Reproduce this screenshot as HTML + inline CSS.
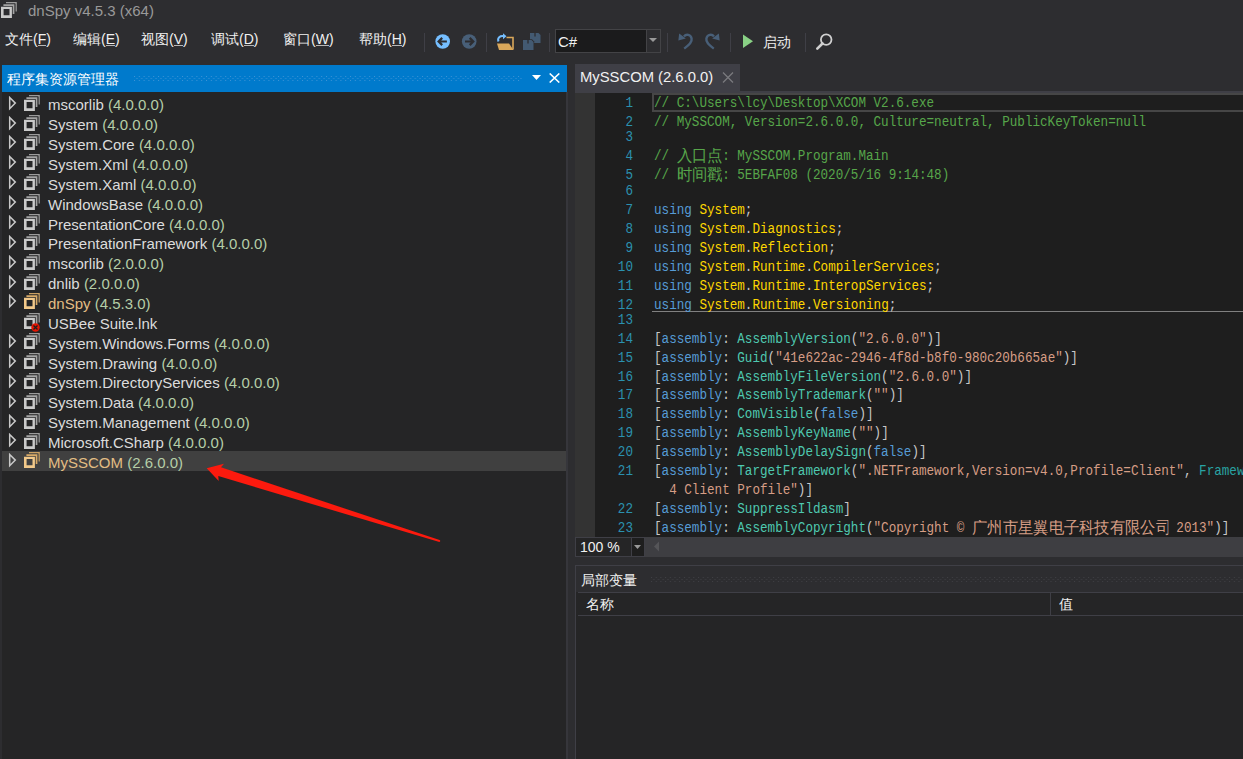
<!DOCTYPE html>
<html><head><meta charset="utf-8">
<style>
*{margin:0;padding:0;box-sizing:border-box}
html,body{width:1243px;height:759px;overflow:hidden;background:#2d2d30;font-family:"Liberation Sans",sans-serif;position:relative}
.a{position:absolute}
.t{position:absolute;white-space:pre;line-height:1}
#title{left:28px;top:3px;font-size:15px;color:#999999}
.menu{top:32px;font-size:14px;color:#f1f1f1}
.menu u{text-decoration:none;display:inline-block;line-height:11px;border-bottom:1px solid #b8b8b8}
.sep{position:absolute;width:1px;background:#3f3f46}
.row{position:absolute;left:2px;width:565px;height:20px}
.row .nm{position:absolute;left:46px;top:2px;font-size:15px;color:#dcdcdc;white-space:pre;line-height:16px}
.ver{color:#b5cea8}
.org{color:#e2bd84}
.ln{position:absolute;left:595px;width:38px;text-align:right;font-family:"Liberation Mono",monospace;font-size:14px;color:#2b91af;white-space:pre;line-height:14px;transform:scaleX(0.9);transform-origin:100% 0}
.cl{position:absolute;left:654px;font-family:"Liberation Mono",monospace;font-size:14px;color:#dcdcdc;white-space:pre;line-height:14px;transform:scaleX(0.901);transform-origin:0 0}
.cm{color:#57a64a}.kw{color:#569cd6}.ns{color:#ffd700}.pu{color:#c8c8c8}.at{color:#4ec9b0}.st{color:#d69d85}.tl{color:#29a3a3}
.cj{display:inline-block;overflow:hidden;vertical-align:top;font-family:"Liberation Sans",sans-serif;font-size:15px;line-height:14px}
.cl .cj{font-size:16.8px;line-height:16px;margin-top:-1px;height:16px}
</style></head><body>
<svg class="a" style="left:1px;top:1.9px" width="17" height="17" viewBox="0 0 17 17"><path d="M5 0H15.8V9.5H14.3V1.6H5Z" fill="#9c9c9c"/><path d="M1.6 1.6H14.4V12.8H10.6V4.2H1.6Z" fill="#2d2d30"/><path d="M2.4 2.3H13.4V12.1H11.3V4.2H2.4Z" fill="#a4a4a4"/><rect x="-0.6" y="4.0" width="12.2" height="12.7" fill="#2d2d30"/><path fill-rule="evenodd" d="M0 4.7H10.9V16H0Z M2.6 7H8.5V13.2H2.6Z" fill="#cacaca"/></svg><div id="title" class="t">dnSpy v4.5.3 (x64)</div>
<div class="t menu" style="left:5px"><span class="cj" style="width:28px;font-size:14px;line-height:14px">文件</span>(<u>F</u>)</div>
<div class="t menu" style="left:73px"><span class="cj" style="width:28px;font-size:14px;line-height:14px">编辑</span>(<u>E</u>)</div>
<div class="t menu" style="left:141px"><span class="cj" style="width:28px;font-size:14px;line-height:14px">视图</span>(<u>V</u>)</div>
<div class="t menu" style="left:211px"><span class="cj" style="width:28px;font-size:14px;line-height:14px">调试</span>(<u>D</u>)</div>
<div class="t menu" style="left:283px"><span class="cj" style="width:28px;font-size:14px;line-height:14px">窗口</span>(<u>W</u>)</div>
<div class="t menu" style="left:359px"><span class="cj" style="width:28px;font-size:14px;line-height:14px">帮助</span>(<u>H</u>)</div>
<div class="sep" style="left:424px;top:33px;height:19px"></div>
<div class="sep" style="left:486px;top:33px;height:19px"></div>
<div class="sep" style="left:549px;top:33px;height:19px"></div>
<div class="sep" style="left:667px;top:33px;height:19px"></div>
<div class="sep" style="left:730px;top:33px;height:19px"></div>
<div class="sep" style="left:805px;top:33px;height:19px"></div>
<svg class="a" style="left:434px;top:33px" width="18" height="18" viewBox="0 0 18 18"><circle cx="8.7" cy="8.5" r="7.3" fill="#75beff"/><path d="M4.6 8.5H12.9M8.2 4.9L4.6 8.5L8.2 12.1" fill="none" stroke="#2d2d30" stroke-width="2.2"/></svg>
<svg class="a" style="left:460px;top:33px" width="18" height="18" viewBox="0 0 18 18"><circle cx="9.2" cy="8.5" r="7.3" fill="#485f78"/><path d="M5 8.5H13.3M9.7 4.9L13.3 8.5L9.7 12.1" fill="none" stroke="#2d2d30" stroke-width="2.2"/></svg>
<svg class="a" style="left:496px;top:32px" width="19" height="19" viewBox="0 0 19 19"><path d="M10.5 5.5H17V17.5" fill="none" stroke="#d9a75a" stroke-width="1.6"/><path d="M1 11.5H13L17.5 18H3Z" fill="#d9a75a"/><path d="M2.5 9.5C1 6 4 3.5 8 4.2" fill="none" stroke="#75beff" stroke-width="2"/><path d="M7 1.2L10.5 4.3L7 7.2Z" fill="#75beff"/></svg>
<svg class="a" style="left:522px;top:32px" width="19" height="19" viewBox="0 0 19 19"><path d="M8 1H16.5L18.5 3V11H8Z" fill="#435a72"/><path d="M13 1V4.5" stroke="#2d2d30" stroke-width="1.3"/><path d="M0.3 7.3H10L12.2 9.5V18.7H0.3Z" fill="#2d2d30"/><path d="M1 8H9.5L11.5 10V18H1Z" fill="#435a72"/><path d="M6 8V11.5" stroke="#2d2d30" stroke-width="1.3"/></svg>
<div class="a" style="left:555px;top:29px;width:106px;height:24px;background:#1b1b1c;border:1px solid #434346"></div>
<div class="a" style="left:646px;top:30px;width:14px;height:22px;background:#2d2d30;border-left:1px solid #434346"></div>
<svg class="a" style="left:649px;top:38px" width="9" height="5"><path d="M0 0H8L4 4Z" fill="#999"/></svg>
<div class="t" style="left:558px;top:34px;font-size:15px;color:#f1f1f1">C#</div>
<svg class="a" style="left:677px;top:33px" width="17" height="17" viewBox="0 0 17 17"><path d="M7 3.4C9 0.9 13.6 1 14.6 5.5C15.3 8.8 12.2 12 7.2 15.6" fill="none" stroke="#485f78" stroke-width="2.4"/><path d="M2.2 0.6L1.3 7.5L8.8 5.6Z" fill="#485f78"/></svg>
<svg class="a" style="left:704.3px;top:33px" width="17" height="17" viewBox="0 0 17 17"><g transform="translate(17,0) scale(-1,1)"><path d="M7 3.4C9 0.9 13.6 1 14.6 5.5C15.3 8.8 12.2 12 7.2 15.6" fill="none" stroke="#485f78" stroke-width="2.4"/><path d="M2.2 0.6L1.3 7.5L8.8 5.6Z" fill="#485f78"/></g></svg>
<svg class="a" style="left:743px;top:34px" width="11" height="15"><path d="M0 0.5L10 7.2L0 14Z" fill="#89d185"/></svg>
<div class="t" style="left:763px;top:35px;font-size:14px;color:#f1f1f1"><span class="cj" style="width:29px;font-size:14px">启动</span></div>
<svg class="a" style="left:815px;top:32px" width="19" height="19" viewBox="0 0 19 19"><circle cx="11.2" cy="7.6" r="5.3" fill="none" stroke="#d0d0d0" stroke-width="1.8"/><path d="M7.5 11.5L2.3 16.7" stroke="#d0d0d0" stroke-width="2.6" stroke-linecap="round"/></svg>
<div class="a" style="left:2px;top:65px;width:565px;height:694px;background:#252526"></div>
<div class="a" style="left:2px;top:65px;width:565px;height:27px;background:#007acc"></div>
<div class="t" style="left:7px;top:72px;font-size:14px;color:#ffffff"><span class="cj" style="width:114px;font-size:14px;line-height:14px">程序集资源管理器</span></div>
<svg class="a" style="left:134px;top:76px" width="388" height="5"><defs><pattern id="dp" width="4.8" height="4" patternUnits="userSpaceOnUse"><rect x="0" y="0" width="1" height="1" fill="#3d93d6"/><rect x="2.4" y="2" width="1" height="1" fill="#3d93d6"/></pattern></defs><rect width="388" height="5" fill="url(#dp)"/></svg>
<svg class="a" style="left:531.5px;top:75px" width="10" height="6"><path d="M0 0H9L4.5 5Z" fill="#ffffff"/></svg>
<svg class="a" style="left:549px;top:73px" width="11" height="10"><path d="M0.7 0.5L10.3 9.5M10.3 0.5L0.7 9.5" stroke="#ffffff" stroke-width="1.6"/></svg>
<svg class="a" style="left:8px;top:95.70px" width="10" height="15"><path d="M1.7 1.5L7.3 7.1L1.7 12.7Z" fill="none" stroke="#c8c8c8" stroke-width="1.5" stroke-linejoin="miter"/></svg>
<svg class="a" style="left:23.5px;top:94.7px" width="17" height="17" viewBox="0 0 17 17"><path d="M5 0H15.8V9.5H14.3V1.6H5Z" fill="#9c9c9c"/><path d="M1.6 1.6H14.4V12.8H10.6V4.2H1.6Z" fill="#252526"/><path d="M2.4 2.3H13.4V12.1H11.3V4.2H2.4Z" fill="#a4a4a4"/><rect x="-0.6" y="4.0" width="12.2" height="12.7" fill="#252526"/><path fill-rule="evenodd" d="M0 4.7H10.9V16H0Z M2.6 7H8.5V13.2H2.6Z" fill="#cacaca"/></svg><div class="t" style="left:48px;top:97.30px;font-size:15px;color:#dcdcdc"><span class="">mscorlib</span> <span class="ver">(4.0.0.0)</span></div>
<svg class="a" style="left:8px;top:115.57px" width="10" height="15"><path d="M1.7 1.5L7.3 7.1L1.7 12.7Z" fill="none" stroke="#c8c8c8" stroke-width="1.5" stroke-linejoin="miter"/></svg>
<svg class="a" style="left:23.5px;top:114.6px" width="17" height="17" viewBox="0 0 17 17"><path d="M5 0H15.8V9.5H14.3V1.6H5Z" fill="#9c9c9c"/><path d="M1.6 1.6H14.4V12.8H10.6V4.2H1.6Z" fill="#252526"/><path d="M2.4 2.3H13.4V12.1H11.3V4.2H2.4Z" fill="#a4a4a4"/><rect x="-0.6" y="4.0" width="12.2" height="12.7" fill="#252526"/><path fill-rule="evenodd" d="M0 4.7H10.9V16H0Z M2.6 7H8.5V13.2H2.6Z" fill="#cacaca"/></svg><div class="t" style="left:48px;top:117.17px;font-size:15px;color:#dcdcdc"><span class="">System</span> <span class="ver">(4.0.0.0)</span></div>
<svg class="a" style="left:8px;top:135.44px" width="10" height="15"><path d="M1.7 1.5L7.3 7.1L1.7 12.7Z" fill="none" stroke="#c8c8c8" stroke-width="1.5" stroke-linejoin="miter"/></svg>
<svg class="a" style="left:23.5px;top:134.4px" width="17" height="17" viewBox="0 0 17 17"><path d="M5 0H15.8V9.5H14.3V1.6H5Z" fill="#9c9c9c"/><path d="M1.6 1.6H14.4V12.8H10.6V4.2H1.6Z" fill="#252526"/><path d="M2.4 2.3H13.4V12.1H11.3V4.2H2.4Z" fill="#a4a4a4"/><rect x="-0.6" y="4.0" width="12.2" height="12.7" fill="#252526"/><path fill-rule="evenodd" d="M0 4.7H10.9V16H0Z M2.6 7H8.5V13.2H2.6Z" fill="#cacaca"/></svg><div class="t" style="left:48px;top:137.04px;font-size:15px;color:#dcdcdc"><span class="">System.Core</span> <span class="ver">(4.0.0.0)</span></div>
<svg class="a" style="left:8px;top:155.31px" width="10" height="15"><path d="M1.7 1.5L7.3 7.1L1.7 12.7Z" fill="none" stroke="#c8c8c8" stroke-width="1.5" stroke-linejoin="miter"/></svg>
<svg class="a" style="left:23.5px;top:154.3px" width="17" height="17" viewBox="0 0 17 17"><path d="M5 0H15.8V9.5H14.3V1.6H5Z" fill="#9c9c9c"/><path d="M1.6 1.6H14.4V12.8H10.6V4.2H1.6Z" fill="#252526"/><path d="M2.4 2.3H13.4V12.1H11.3V4.2H2.4Z" fill="#a4a4a4"/><rect x="-0.6" y="4.0" width="12.2" height="12.7" fill="#252526"/><path fill-rule="evenodd" d="M0 4.7H10.9V16H0Z M2.6 7H8.5V13.2H2.6Z" fill="#cacaca"/></svg><div class="t" style="left:48px;top:156.91px;font-size:15px;color:#dcdcdc"><span class="">System.Xml</span> <span class="ver">(4.0.0.0)</span></div>
<svg class="a" style="left:8px;top:175.18px" width="10" height="15"><path d="M1.7 1.5L7.3 7.1L1.7 12.7Z" fill="none" stroke="#c8c8c8" stroke-width="1.5" stroke-linejoin="miter"/></svg>
<svg class="a" style="left:23.5px;top:174.2px" width="17" height="17" viewBox="0 0 17 17"><path d="M5 0H15.8V9.5H14.3V1.6H5Z" fill="#9c9c9c"/><path d="M1.6 1.6H14.4V12.8H10.6V4.2H1.6Z" fill="#252526"/><path d="M2.4 2.3H13.4V12.1H11.3V4.2H2.4Z" fill="#a4a4a4"/><rect x="-0.6" y="4.0" width="12.2" height="12.7" fill="#252526"/><path fill-rule="evenodd" d="M0 4.7H10.9V16H0Z M2.6 7H8.5V13.2H2.6Z" fill="#cacaca"/></svg><div class="t" style="left:48px;top:176.78px;font-size:15px;color:#dcdcdc"><span class="">System.Xaml</span> <span class="ver">(4.0.0.0)</span></div>
<svg class="a" style="left:8px;top:195.05px" width="10" height="15"><path d="M1.7 1.5L7.3 7.1L1.7 12.7Z" fill="none" stroke="#c8c8c8" stroke-width="1.5" stroke-linejoin="miter"/></svg>
<svg class="a" style="left:23.5px;top:194.1px" width="17" height="17" viewBox="0 0 17 17"><path d="M5 0H15.8V9.5H14.3V1.6H5Z" fill="#9c9c9c"/><path d="M1.6 1.6H14.4V12.8H10.6V4.2H1.6Z" fill="#252526"/><path d="M2.4 2.3H13.4V12.1H11.3V4.2H2.4Z" fill="#a4a4a4"/><rect x="-0.6" y="4.0" width="12.2" height="12.7" fill="#252526"/><path fill-rule="evenodd" d="M0 4.7H10.9V16H0Z M2.6 7H8.5V13.2H2.6Z" fill="#cacaca"/></svg><div class="t" style="left:48px;top:196.65px;font-size:15px;color:#dcdcdc"><span class="">WindowsBase</span> <span class="ver">(4.0.0.0)</span></div>
<svg class="a" style="left:8px;top:214.92px" width="10" height="15"><path d="M1.7 1.5L7.3 7.1L1.7 12.7Z" fill="none" stroke="#c8c8c8" stroke-width="1.5" stroke-linejoin="miter"/></svg>
<svg class="a" style="left:23.5px;top:213.9px" width="17" height="17" viewBox="0 0 17 17"><path d="M5 0H15.8V9.5H14.3V1.6H5Z" fill="#9c9c9c"/><path d="M1.6 1.6H14.4V12.8H10.6V4.2H1.6Z" fill="#252526"/><path d="M2.4 2.3H13.4V12.1H11.3V4.2H2.4Z" fill="#a4a4a4"/><rect x="-0.6" y="4.0" width="12.2" height="12.7" fill="#252526"/><path fill-rule="evenodd" d="M0 4.7H10.9V16H0Z M2.6 7H8.5V13.2H2.6Z" fill="#cacaca"/></svg><div class="t" style="left:48px;top:216.52px;font-size:15px;color:#dcdcdc"><span class="">PresentationCore</span> <span class="ver">(4.0.0.0)</span></div>
<svg class="a" style="left:8px;top:234.79px" width="10" height="15"><path d="M1.7 1.5L7.3 7.1L1.7 12.7Z" fill="none" stroke="#c8c8c8" stroke-width="1.5" stroke-linejoin="miter"/></svg>
<svg class="a" style="left:23.5px;top:233.8px" width="17" height="17" viewBox="0 0 17 17"><path d="M5 0H15.8V9.5H14.3V1.6H5Z" fill="#9c9c9c"/><path d="M1.6 1.6H14.4V12.8H10.6V4.2H1.6Z" fill="#252526"/><path d="M2.4 2.3H13.4V12.1H11.3V4.2H2.4Z" fill="#a4a4a4"/><rect x="-0.6" y="4.0" width="12.2" height="12.7" fill="#252526"/><path fill-rule="evenodd" d="M0 4.7H10.9V16H0Z M2.6 7H8.5V13.2H2.6Z" fill="#cacaca"/></svg><div class="t" style="left:48px;top:236.39px;font-size:15px;color:#dcdcdc"><span class="">PresentationFramework</span> <span class="ver">(4.0.0.0)</span></div>
<svg class="a" style="left:8px;top:254.66px" width="10" height="15"><path d="M1.7 1.5L7.3 7.1L1.7 12.7Z" fill="none" stroke="#c8c8c8" stroke-width="1.5" stroke-linejoin="miter"/></svg>
<svg class="a" style="left:23.5px;top:253.7px" width="17" height="17" viewBox="0 0 17 17"><path d="M5 0H15.8V9.5H14.3V1.6H5Z" fill="#9c9c9c"/><path d="M1.6 1.6H14.4V12.8H10.6V4.2H1.6Z" fill="#252526"/><path d="M2.4 2.3H13.4V12.1H11.3V4.2H2.4Z" fill="#a4a4a4"/><rect x="-0.6" y="4.0" width="12.2" height="12.7" fill="#252526"/><path fill-rule="evenodd" d="M0 4.7H10.9V16H0Z M2.6 7H8.5V13.2H2.6Z" fill="#cacaca"/></svg><div class="t" style="left:48px;top:256.26px;font-size:15px;color:#dcdcdc"><span class="">mscorlib</span> <span class="ver">(2.0.0.0)</span></div>
<svg class="a" style="left:8px;top:274.53px" width="10" height="15"><path d="M1.7 1.5L7.3 7.1L1.7 12.7Z" fill="none" stroke="#c8c8c8" stroke-width="1.5" stroke-linejoin="miter"/></svg>
<svg class="a" style="left:23.5px;top:273.5px" width="17" height="17" viewBox="0 0 17 17"><path d="M5 0H15.8V9.5H14.3V1.6H5Z" fill="#9c9c9c"/><path d="M1.6 1.6H14.4V12.8H10.6V4.2H1.6Z" fill="#252526"/><path d="M2.4 2.3H13.4V12.1H11.3V4.2H2.4Z" fill="#a4a4a4"/><rect x="-0.6" y="4.0" width="12.2" height="12.7" fill="#252526"/><path fill-rule="evenodd" d="M0 4.7H10.9V16H0Z M2.6 7H8.5V13.2H2.6Z" fill="#cacaca"/></svg><div class="t" style="left:48px;top:276.13px;font-size:15px;color:#dcdcdc"><span class="">dnlib</span> <span class="ver">(2.0.0.0)</span></div>
<svg class="a" style="left:8px;top:294.40px" width="10" height="15"><path d="M1.7 1.5L7.3 7.1L1.7 12.7Z" fill="none" stroke="#c8c8c8" stroke-width="1.5" stroke-linejoin="miter"/></svg>
<svg class="a" style="left:23.5px;top:293.4px" width="17" height="17" viewBox="0 0 17 17"><path d="M5 0H15.8V9.5H14.3V1.6H5Z" fill="#caa062"/><path d="M1.6 1.6H14.4V12.8H10.6V4.2H1.6Z" fill="#252526"/><path d="M2.4 2.3H13.4V12.1H11.3V4.2H2.4Z" fill="#d8aa68"/><rect x="-0.6" y="4.0" width="12.2" height="12.7" fill="#252526"/><path fill-rule="evenodd" d="M0 4.7H10.9V16H0Z M2.6 7H8.5V13.2H2.6Z" fill="#f2c98a"/></svg><div class="t" style="left:48px;top:296.00px;font-size:15px;color:#dcdcdc"><span class="org">dnSpy</span> <span class="ver">(4.5.3.0)</span></div>
<svg class="a" style="left:23.5px;top:313.3px" width="17" height="17" viewBox="0 0 17 17"><path d="M5 0H15.8V9.5H14.3V1.6H5Z" fill="#9c9c9c"/><path d="M1.6 1.6H14.4V12.8H10.6V4.2H1.6Z" fill="#252526"/><path d="M2.4 2.3H13.4V12.1H11.3V4.2H2.4Z" fill="#a4a4a4"/><rect x="-0.6" y="4.0" width="12.2" height="12.7" fill="#252526"/><path fill-rule="evenodd" d="M0 4.7H10.9V16H0Z M2.6 7H8.5V13.2H2.6Z" fill="#cacaca"/></svg><svg class="a" style="left:31px;top:323px" width="9" height="9"><circle cx="4.5" cy="4.5" r="4.2" fill="#e51400"/><path d="M2.5 2.5L6.5 6.5M6.5 2.5L2.5 6.5" stroke="#1e1e1e" stroke-width="1.3"/></svg>
<div class="t" style="left:48px;top:315.87px;font-size:15px;color:#dcdcdc"><span class="">USBee Suite.lnk</span></div>
<svg class="a" style="left:8px;top:334.14px" width="10" height="15"><path d="M1.7 1.5L7.3 7.1L1.7 12.7Z" fill="none" stroke="#c8c8c8" stroke-width="1.5" stroke-linejoin="miter"/></svg>
<svg class="a" style="left:23.5px;top:333.1px" width="17" height="17" viewBox="0 0 17 17"><path d="M5 0H15.8V9.5H14.3V1.6H5Z" fill="#9c9c9c"/><path d="M1.6 1.6H14.4V12.8H10.6V4.2H1.6Z" fill="#252526"/><path d="M2.4 2.3H13.4V12.1H11.3V4.2H2.4Z" fill="#a4a4a4"/><rect x="-0.6" y="4.0" width="12.2" height="12.7" fill="#252526"/><path fill-rule="evenodd" d="M0 4.7H10.9V16H0Z M2.6 7H8.5V13.2H2.6Z" fill="#cacaca"/></svg><div class="t" style="left:48px;top:335.74px;font-size:15px;color:#dcdcdc"><span class="">System.Windows.Forms</span> <span class="ver">(4.0.0.0)</span></div>
<svg class="a" style="left:8px;top:354.01px" width="10" height="15"><path d="M1.7 1.5L7.3 7.1L1.7 12.7Z" fill="none" stroke="#c8c8c8" stroke-width="1.5" stroke-linejoin="miter"/></svg>
<svg class="a" style="left:23.5px;top:353.0px" width="17" height="17" viewBox="0 0 17 17"><path d="M5 0H15.8V9.5H14.3V1.6H5Z" fill="#9c9c9c"/><path d="M1.6 1.6H14.4V12.8H10.6V4.2H1.6Z" fill="#252526"/><path d="M2.4 2.3H13.4V12.1H11.3V4.2H2.4Z" fill="#a4a4a4"/><rect x="-0.6" y="4.0" width="12.2" height="12.7" fill="#252526"/><path fill-rule="evenodd" d="M0 4.7H10.9V16H0Z M2.6 7H8.5V13.2H2.6Z" fill="#cacaca"/></svg><div class="t" style="left:48px;top:355.61px;font-size:15px;color:#dcdcdc"><span class="">System.Drawing</span> <span class="ver">(4.0.0.0)</span></div>
<svg class="a" style="left:8px;top:373.88px" width="10" height="15"><path d="M1.7 1.5L7.3 7.1L1.7 12.7Z" fill="none" stroke="#c8c8c8" stroke-width="1.5" stroke-linejoin="miter"/></svg>
<svg class="a" style="left:23.5px;top:372.9px" width="17" height="17" viewBox="0 0 17 17"><path d="M5 0H15.8V9.5H14.3V1.6H5Z" fill="#9c9c9c"/><path d="M1.6 1.6H14.4V12.8H10.6V4.2H1.6Z" fill="#252526"/><path d="M2.4 2.3H13.4V12.1H11.3V4.2H2.4Z" fill="#a4a4a4"/><rect x="-0.6" y="4.0" width="12.2" height="12.7" fill="#252526"/><path fill-rule="evenodd" d="M0 4.7H10.9V16H0Z M2.6 7H8.5V13.2H2.6Z" fill="#cacaca"/></svg><div class="t" style="left:48px;top:375.48px;font-size:15px;color:#dcdcdc"><span class="">System.DirectoryServices</span> <span class="ver">(4.0.0.0)</span></div>
<svg class="a" style="left:8px;top:393.75px" width="10" height="15"><path d="M1.7 1.5L7.3 7.1L1.7 12.7Z" fill="none" stroke="#c8c8c8" stroke-width="1.5" stroke-linejoin="miter"/></svg>
<svg class="a" style="left:23.5px;top:392.8px" width="17" height="17" viewBox="0 0 17 17"><path d="M5 0H15.8V9.5H14.3V1.6H5Z" fill="#9c9c9c"/><path d="M1.6 1.6H14.4V12.8H10.6V4.2H1.6Z" fill="#252526"/><path d="M2.4 2.3H13.4V12.1H11.3V4.2H2.4Z" fill="#a4a4a4"/><rect x="-0.6" y="4.0" width="12.2" height="12.7" fill="#252526"/><path fill-rule="evenodd" d="M0 4.7H10.9V16H0Z M2.6 7H8.5V13.2H2.6Z" fill="#cacaca"/></svg><div class="t" style="left:48px;top:395.35px;font-size:15px;color:#dcdcdc"><span class="">System.Data</span> <span class="ver">(4.0.0.0)</span></div>
<svg class="a" style="left:8px;top:413.62px" width="10" height="15"><path d="M1.7 1.5L7.3 7.1L1.7 12.7Z" fill="none" stroke="#c8c8c8" stroke-width="1.5" stroke-linejoin="miter"/></svg>
<svg class="a" style="left:23.5px;top:412.6px" width="17" height="17" viewBox="0 0 17 17"><path d="M5 0H15.8V9.5H14.3V1.6H5Z" fill="#9c9c9c"/><path d="M1.6 1.6H14.4V12.8H10.6V4.2H1.6Z" fill="#252526"/><path d="M2.4 2.3H13.4V12.1H11.3V4.2H2.4Z" fill="#a4a4a4"/><rect x="-0.6" y="4.0" width="12.2" height="12.7" fill="#252526"/><path fill-rule="evenodd" d="M0 4.7H10.9V16H0Z M2.6 7H8.5V13.2H2.6Z" fill="#cacaca"/></svg><div class="t" style="left:48px;top:415.22px;font-size:15px;color:#dcdcdc"><span class="">System.Management</span> <span class="ver">(4.0.0.0)</span></div>
<svg class="a" style="left:8px;top:433.49px" width="10" height="15"><path d="M1.7 1.5L7.3 7.1L1.7 12.7Z" fill="none" stroke="#c8c8c8" stroke-width="1.5" stroke-linejoin="miter"/></svg>
<svg class="a" style="left:23.5px;top:432.5px" width="17" height="17" viewBox="0 0 17 17"><path d="M5 0H15.8V9.5H14.3V1.6H5Z" fill="#9c9c9c"/><path d="M1.6 1.6H14.4V12.8H10.6V4.2H1.6Z" fill="#252526"/><path d="M2.4 2.3H13.4V12.1H11.3V4.2H2.4Z" fill="#a4a4a4"/><rect x="-0.6" y="4.0" width="12.2" height="12.7" fill="#252526"/><path fill-rule="evenodd" d="M0 4.7H10.9V16H0Z M2.6 7H8.5V13.2H2.6Z" fill="#cacaca"/></svg><div class="t" style="left:48px;top:435.09px;font-size:15px;color:#dcdcdc"><span class="">Microsoft.CSharp</span> <span class="ver">(4.0.0.0)</span></div>
<div class="a" style="left:2px;top:451.3px;width:565px;height:19.7px;background:#404040"></div>
<svg class="a" style="left:8px;top:453.36px" width="10" height="15"><path d="M1.7 1.5L7.3 7.1L1.7 12.7Z" fill="none" stroke="#c8c8c8" stroke-width="1.5" stroke-linejoin="miter"/></svg>
<svg class="a" style="left:23.5px;top:452.4px" width="17" height="17" viewBox="0 0 17 17"><path d="M5 0H15.8V9.5H14.3V1.6H5Z" fill="#caa062"/><path d="M1.6 1.6H14.4V12.8H10.6V4.2H1.6Z" fill="#404040"/><path d="M2.4 2.3H13.4V12.1H11.3V4.2H2.4Z" fill="#d8aa68"/><rect x="-0.6" y="4.0" width="12.2" height="12.7" fill="#404040"/><path fill-rule="evenodd" d="M0 4.7H10.9V16H0Z M2.6 7H8.5V13.2H2.6Z" fill="#f2c98a"/></svg><div class="t" style="left:48px;top:454.96px;font-size:15px;color:#dcdcdc"><span class="org">MySSCOM</span> <span class="ver">(2.6.0.0)</span></div>
<div class="a" style="left:566px;top:92px;width:2px;height:667px;background:#36363b"></div>
<div class="a" style="left:575px;top:64px;width:165px;height:29px;background:#3f3f46"></div>
<div class="a" style="left:575px;top:91px;width:668px;height:2px;background:#3f3f46"></div>
<div class="t" style="left:580px;top:70px;font-size:14.8px;color:#f1f1f1">MySSCOM (2.6.0.0)</div>
<svg class="a" style="left:722px;top:72px" width="12" height="11"><path d="M1 0.5L11 10.5M11 0.5L1 10.5" stroke="#7a7a7e" stroke-width="1.3"/></svg>
<div class="a" style="left:575px;top:93px;width:668px;height:444px;background:#1e1e1e"></div>
<div class="a" style="left:575px;top:93px;width:20px;height:444px;background:#333333"></div>
<div class="a" style="left:652px;top:93px;width:600px;height:19px;border:2px solid #464646"></div>
<div class="a" style="left:652px;top:311px;width:600px;height:1px;background:#808080"></div>
<div class="a" style="left:595px;top:93px;width:648px;height:444px;overflow:hidden">
<div class="ln" style="left:0px;top:3.10px">1</div>
<div class="cl" style="left:59px;top:3.10px"><span class="cm">// C:\Users\lcy\Desktop\XCOM V2.6.exe</span></div>
<div class="ln" style="left:0px;top:21.90px">2</div>
<div class="cl" style="left:59px;top:21.90px"><span class="cm">// MySSCOM, Version=2.6.0.0, Culture=neutral, PublicKeyToken=null</span></div>
<div class="ln" style="left:0px;top:37.00px">3</div>
<div class="ln" style="left:0px;top:56.20px">4</div>
<div class="cl" style="left:59px;top:56.20px"><span class="cm">// </span><span class="cj cm" style="width:50.41px">入口点</span><span class="cm">: MySSCOM.Program.Main</span></div>
<div class="ln" style="left:0px;top:75.20px">5</div>
<div class="cl" style="left:59px;top:75.20px"><span class="cm">// </span><span class="cj cm" style="width:50.41px">时间戳</span><span class="cm">: 5EBFAF08 (2020/5/16 9:14:48)</span></div>
<div class="ln" style="left:0px;top:91.00px">6</div>
<div class="ln" style="left:0px;top:110.00px">7</div>
<div class="cl" style="left:59px;top:110.00px"><span class="kw">using</span> <span class="ns">System</span><span class="pu">;</span></div>
<div class="ln" style="left:0px;top:128.90px">8</div>
<div class="cl" style="left:59px;top:128.90px"><span class="kw">using</span> <span class="ns">System</span><span class="pu">.</span><span class="ns">Diagnostics</span><span class="pu">;</span></div>
<div class="ln" style="left:0px;top:148.00px">9</div>
<div class="cl" style="left:59px;top:148.00px"><span class="kw">using</span> <span class="ns">System</span><span class="pu">.</span><span class="ns">Reflection</span><span class="pu">;</span></div>
<div class="ln" style="left:0px;top:166.80px">10</div>
<div class="cl" style="left:59px;top:166.80px"><span class="kw">using</span> <span class="ns">System</span><span class="pu">.</span><span class="ns">Runtime</span><span class="pu">.</span><span class="ns">CompilerServices</span><span class="pu">;</span></div>
<div class="ln" style="left:0px;top:185.50px">11</div>
<div class="cl" style="left:59px;top:185.50px"><span class="kw">using</span> <span class="ns">System</span><span class="pu">.</span><span class="ns">Runtime</span><span class="pu">.</span><span class="ns">InteropServices</span><span class="pu">;</span></div>
<div class="ln" style="left:0px;top:204.60px">12</div>
<div class="cl" style="left:59px;top:204.60px"><span class="kw">using</span> <span class="ns">System</span><span class="pu">.</span><span class="ns">Runtime</span><span class="pu">.</span><span class="ns">Versioning</span><span class="pu">;</span></div>
<div class="ln" style="left:0px;top:220.00px">13</div>
<div class="ln" style="left:0px;top:238.90px">14</div>
<div class="cl" style="left:59px;top:238.90px"><span class="pu">[</span><span class="kw">assembly</span><span class="pu">: </span><span class="at">AssemblyVersion</span><span class="pu">(</span><span class="st">&quot;2.6.0.0&quot;</span><span class="pu">)</span><span class="pu">]</span></div>
<div class="ln" style="left:0px;top:257.90px">15</div>
<div class="cl" style="left:59px;top:257.90px"><span class="pu">[</span><span class="kw">assembly</span><span class="pu">: </span><span class="at">Guid</span><span class="pu">(</span><span class="st">&quot;41e622ac-2946-4f8d-b8f0-980c20b665ae&quot;</span><span class="pu">)</span><span class="pu">]</span></div>
<div class="ln" style="left:0px;top:276.90px">16</div>
<div class="cl" style="left:59px;top:276.90px"><span class="pu">[</span><span class="kw">assembly</span><span class="pu">: </span><span class="at">AssemblyFileVersion</span><span class="pu">(</span><span class="st">&quot;2.6.0.0&quot;</span><span class="pu">)</span><span class="pu">]</span></div>
<div class="ln" style="left:0px;top:295.20px">17</div>
<div class="cl" style="left:59px;top:295.20px"><span class="pu">[</span><span class="kw">assembly</span><span class="pu">: </span><span class="at">AssemblyTrademark</span><span class="pu">(</span><span class="st">&quot;&quot;</span><span class="pu">)</span><span class="pu">]</span></div>
<div class="ln" style="left:0px;top:314.20px">18</div>
<div class="cl" style="left:59px;top:314.20px"><span class="pu">[</span><span class="kw">assembly</span><span class="pu">: </span><span class="at">ComVisible</span><span class="pu">(</span><span class="kw">false</span><span class="pu">)</span><span class="pu">]</span></div>
<div class="ln" style="left:0px;top:333.20px">19</div>
<div class="cl" style="left:59px;top:333.20px"><span class="pu">[</span><span class="kw">assembly</span><span class="pu">: </span><span class="at">AssemblyKeyName</span><span class="pu">(</span><span class="st">&quot;&quot;</span><span class="pu">)</span><span class="pu">]</span></div>
<div class="ln" style="left:0px;top:352.10px">20</div>
<div class="cl" style="left:59px;top:352.10px"><span class="pu">[</span><span class="kw">assembly</span><span class="pu">: </span><span class="at">AssemblyDelaySign</span><span class="pu">(</span><span class="kw">false</span><span class="pu">)</span><span class="pu">]</span></div>
<div class="ln" style="left:0px;top:371.10px">21</div>
<div class="cl" style="left:59px;top:371.10px"><span class="pu">[</span><span class="kw">assembly</span><span class="pu">: </span><span class="at">TargetFramework</span><span class="pu">(</span><span class="st">&quot;.NETFramework,Version=v4.0,Profile=Client&quot;</span><span class="pu">, </span><span class="tl">FrameworkDisplayName</span><span class="pu"> = </span><span class="st">&quot;.NET Framework</span></div>
<div class="ln" style="left:0px;top:409.10px">22</div>
<div class="cl" style="left:59px;top:409.10px"><span class="pu">[</span><span class="kw">assembly</span><span class="pu">: </span><span class="at">SuppressIldasm</span><span class="pu">]</span></div>
<div class="ln" style="left:0px;top:428.00px">23</div>
<div class="cl" style="left:59px;top:428.00px"><span class="pu">[</span><span class="kw">assembly</span><span class="pu">: </span><span class="at">AssemblyCopyright</span><span class="pu">(</span><span class="st">&quot;Copyright © </span><span class="cj st" style="width:218.45px">广州市星翼电子科技有限公司</span><span class="st"> 2013&quot;</span><span class="pu">)]</span></div>
<div class="cl" style="left:59px;top:390.10px">  <span class="st">4 Client Profile&quot;</span><span class="pu">)]</span></div>
</div>
<div class="a" style="left:575px;top:537px;width:668px;height:20px;background:#3e3e42"></div>
<div class="a" style="left:575px;top:537px;width:70px;height:20px;background:#252526;border:1px solid #3f3f46"></div>
<div class="a" style="left:631px;top:538px;width:13px;height:18px;background:#1e1e1e;border-left:1px solid #3f3f46"></div>
<svg class="a" style="left:634px;top:545px" width="8" height="5"><path d="M0 0H7L3.5 4Z" fill="#999"/></svg>
<div class="t" style="left:580px;top:540px;font-size:14px;color:#f1f1f1">100 %</div>
<svg class="a" style="left:654px;top:541px" width="6" height="11"><path d="M5 0.5V10.5L0 5.5Z" fill="#555558"/></svg>
<div class="a" style="left:575px;top:565px;width:668px;height:194px;background:#2d2d30;border:1px solid #3f3f46;border-right:none;border-bottom:none"></div>
<div class="t" style="left:581px;top:573px;font-size:14px;color:#f1f1f1"><span class="cj" style="width:57px;font-size:14px">局部变量</span></div>
<svg class="a" style="left:651px;top:577px" width="592" height="5"><defs><pattern id="dp2" width="4.7" height="4" patternUnits="userSpaceOnUse"><rect x="0" y="0" width="1" height="1" fill="#404045"/><rect x="2.35" y="2" width="1" height="1" fill="#404045"/></pattern></defs><rect width="592" height="5" fill="url(#dp2)"/></svg>
<div class="a" style="left:576px;top:592px;width:667px;height:167px;background:#252526"></div>
<div class="a" style="left:578px;top:592px;width:665px;height:1px;background:#3f3f46"></div>
<div class="a" style="left:578px;top:615px;width:665px;height:1px;background:#3f3f46"></div>
<div class="a" style="left:1050px;top:593px;width:1px;height:22px;background:#3f3f46"></div>
<div class="t" style="left:586px;top:597px;font-size:14px;color:#f1f1f1"><span class="cj" style="width:28px;font-size:14px">名称</span></div>
<div class="t" style="left:1059px;top:597px;font-size:14px;color:#f1f1f1"><span class="cj" style="width:14px;font-size:14px">值</span></div>
<svg class="a" style="left:0;top:0" width="1243" height="759" viewBox="0 0 1243 759"><path d="M206.7 468.3L224 463.8L221 467.3L439.6 540.1Q441 541.2 439.4 542L218.3 476.1L218.7 481Z" fill="#fc1a0e"/></svg>
</body></html>
